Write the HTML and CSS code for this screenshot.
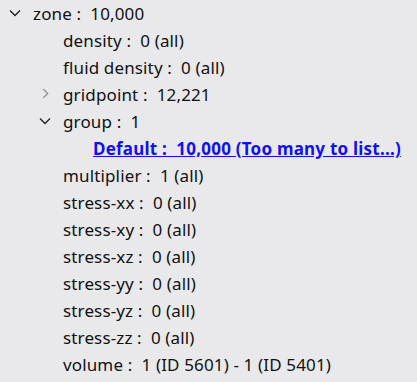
FILE: index.html
```html
<!DOCTYPE html>
<html>
<head>
<meta charset="utf-8">
<link rel="stylesheet" href="styles.css">
</head>
<body>
<ul class="tree root">
  <li>
    <div class="row"><span class="tw"><svg viewBox="0 0 12 8" class="chev"><path d="M1 1.5 L6 6.5 L11 1.5"/></svg></span><span class="lbl">zone :&nbsp; 10,000</span></div>
    <ul class="tree">
      <li><div class="row"><span class="tw"></span><span class="lbl">density :&nbsp; 0 (all)</span></div></li>
      <li><div class="row"><span class="tw"></span><span class="lbl">fluid density :&nbsp; 0 (all)</span></div></li>
      <li><div class="row"><span class="tw"><svg viewBox="0 0 8 12" class="chev-r"><path d="M1.5 1 L6.5 6 L1.5 11"/></svg></span><span class="lbl">gridpoint :&nbsp; 12,221</span></div></li>
      <li>
        <div class="row"><span class="tw"><svg viewBox="0 0 12 8" class="chev"><path d="M1 1.5 L6 6.5 L11 1.5"/></svg></span><span class="lbl">group :&nbsp; 1</span></div>
        <ul class="tree">
          <li><div class="row"><span class="tw"></span><a class="link" href="#">Default :&nbsp; 10,000 (Too many to list...)</a></div></li>
        </ul>
      </li>
      <li><div class="row"><span class="tw"></span><span class="lbl">multiplier :&nbsp; 1 (all)</span></div></li>
      <li><div class="row"><span class="tw"></span><span class="lbl">stress-xx :&nbsp; 0 (all)</span></div></li>
      <li><div class="row"><span class="tw"></span><span class="lbl">stress-xy :&nbsp; 0 (all)</span></div></li>
      <li><div class="row"><span class="tw"></span><span class="lbl">stress-xz :&nbsp; 0 (all)</span></div></li>
      <li><div class="row"><span class="tw"></span><span class="lbl">stress-yy :&nbsp; 0 (all)</span></div></li>
      <li><div class="row"><span class="tw"></span><span class="lbl">stress-yz :&nbsp; 0 (all)</span></div></li>
      <li><div class="row"><span class="tw"></span><span class="lbl">stress-zz :&nbsp; 0 (all)</span></div></li>
      <li><div class="row"><span class="tw"></span><span class="lbl">volume :&nbsp; 1 (ID 5601) - 1 (ID 5401)</span></div></li>
    </ul>
  </li>
</ul>
</body>
</html>
```
FILE: styles.css
```css
html, body {
  margin: 0;
  padding: 0;
  background: #e9e9ec;
}
body {
  font-family: "Noto Sans", "Open Sans", sans-serif;
  font-size: 17px;
  color: #111;
  width: 417px;
  height: 382px;
  overflow: hidden;
}
.tree {
  list-style: none;
  margin: 0;
  padding: 0;
}
.tree .tree {
  padding-left: 30px;
}
.root {
  padding-left: 3px;
}
.row {
  display: flex;
  align-items: center;
  height: 27px;
}
.tw {
  width: 30px;
  flex: 0 0 30px;
  position: relative;
  align-self: stretch;
}
.chev {
  position: absolute;
  left: 6px;
  top: 9px;
  width: 12px;
  height: 8px;
  fill: none;
  stroke: #222;
  stroke-width: 1.4;
}
.chev-r {
  position: absolute;
  left: 9px;
  top: 7px;
  width: 7px;
  height: 11px;
  fill: none;
  stroke: #8a8a8a;
  stroke-width: 1.4;
}
.lbl {
  white-space: nowrap;
  letter-spacing: 0.14px;
}
.link {
  color: #1010f2;
  font-weight: bold;
  text-decoration: underline;
  white-space: nowrap;
  font-size: 17px;
  letter-spacing: 0.22px;
}
```
